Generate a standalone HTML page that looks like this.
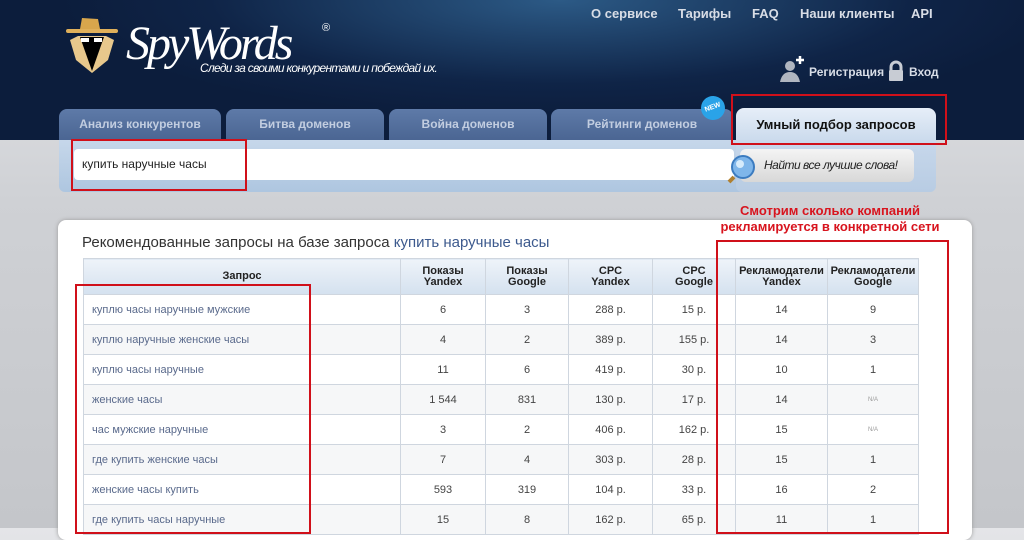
<!DOCTYPE html>
<html><head><meta charset="utf-8"><style>
*{margin:0;padding:0;box-sizing:border-box}
body{width:1024px;height:528px;overflow:hidden;position:relative;font-family:"Liberation Sans",sans-serif;background:linear-gradient(#e4e5e8,#cfd1d5 200px,#c4c6ca)}
.hdr{position:absolute;left:0;top:0;width:1024px;height:140px;background:radial-gradient(ellipse 500px 120px at 560px 0,#2c5a86,#0f2447 70%,#0c1d3c)}
.nav{position:absolute;top:6px;font-weight:bold;font-size:13px;color:#d8dde6}
.logo{position:absolute;left:126px;top:16px;font-family:"Liberation Serif",serif;font-style:italic;font-size:48px;color:#fff;letter-spacing:-3px}
.tag{position:absolute;left:200px;top:61px;font-size:12px;font-style:italic;color:#fff;letter-spacing:-0.7px}
.tab{position:absolute;top:109px;height:32px;border-radius:8px 8px 0 0;background:linear-gradient(#5e7aa8,#4a6592);color:#c2cde0;font-weight:bold;font-size:12px;text-align:center;line-height:30px}
.atab{position:absolute;left:736px;top:108px;width:200px;height:84px;border-radius:8px 8px 6px 6px;background:linear-gradient(#e6eef8,#c5d6ea 40px,#b8cce3)}
.bar{position:absolute;left:59px;top:140px;width:876px;height:52px;background:linear-gradient(#c6d7ea,#aec6e0);border-radius:0 0 6px 6px}
.inp{position:absolute;left:74px;top:149px;width:660px;height:31px;background:#fff;border-radius:4px;font-size:12px;line-height:31px;padding-left:8px;color:#222}
.btn{position:absolute;left:740px;top:149px;width:174px;height:33px;border-radius:6px;background:linear-gradient(#f4f4f4,#d8d8d8);font-style:italic;font-size:12px;line-height:32px;padding-left:24px;color:#222;letter-spacing:-0.5px}
.panel{position:absolute;left:58px;top:220px;width:914px;height:320px;background:#fff;border-radius:8px;box-shadow:0 0 4px #999}
.rb{position:absolute;border:2px solid #d0101a}
table{position:absolute;left:83px;top:258px;border-collapse:collapse;font-size:11px;color:#444}
td,th{border:1px solid #cfd6df;height:30px;text-align:center}
th{height:36px;background:linear-gradient(#eef3f9,#d4e1ef);font-size:11px;line-height:11px;color:#222}
td.q{text-align:left;padding-left:8px;color:#5a6a8c}
tr:nth-child(odd) td{background:#f6f7f8}
.na{font-size:6px;color:#999}
</style></head><body>
<div class="hdr"></div>
<div class="nav" style="left:591px">О сервисе</div>
<div class="nav" style="left:678px">Тарифы</div>
<div class="nav" style="left:752px">FAQ</div>
<div class="nav" style="left:800px">Наши клиенты</div>
<div class="nav" style="left:911px">API</div>
<svg style="position:absolute;left:64px;top:15px" width="56" height="60" viewBox="0 0 56 60">
<path d="M18 3 L34 4 L36 14 L16 14Z" fill="#d8a64c"/><rect x="2" y="14" width="52" height="4" rx="2" fill="#e0b05a"/>
<path d="M6 25 L14 21 L42 21 L50 25 L44 45 L28 58 L12 45Z" fill="#e8c88c"/>
<path d="M16 22 L40 22 L28 56Z" fill="#000"/><rect x="17" y="23" width="8" height="4" fill="#fff"/><rect x="30" y="23" width="8" height="4" fill="#fff"/></svg>
<div class="logo">SpyWords</div>
<div style="position:absolute;left:322px;top:22px;color:#fff;font-size:11px">®</div>
<div class="tag">Следи за своими конкурентами и побеждай их.</div>
<svg style="position:absolute;left:778px;top:54px" width="28" height="30"><circle cx="12" cy="12" r="5" fill="#b0b6c0"/><path d="M2 28 Q4 18 12 18 Q20 18 22 28Z" fill="#b0b6c0"/><path d="M22 2v8M18 6h8" stroke="#fff" stroke-width="2.5"/></svg>
<div class="nav" style="left:809px;top:65px;font-size:12px">Регистрация</div>
<svg style="position:absolute;left:887px;top:60px" width="18" height="22"><path d="M4 10V7a5 5 0 0 1 10 0v3" stroke="#c8ccd4" stroke-width="3" fill="none"/><rect x="2" y="10" width="14" height="11" rx="1" fill="#c8ccd4"/></svg>
<div class="nav" style="left:909px;top:65px;font-size:12px">Вход</div>
<div class="tab" style="left:59px;width:162px">Анализ конкурентов</div>
<div class="tab" style="left:226px;width:158px">Битва доменов</div>
<div class="tab" style="left:389px;width:158px">Война доменов</div>
<div class="tab" style="left:551px;width:182px">Рейтинги доменов</div>
<div style="position:absolute;left:701px;top:96px;width:24px;height:24px;border-radius:50%;background:#2aa3e8;color:#fff;font-size:7px;font-weight:bold;text-align:center;line-height:24px;transform:rotate(-20deg)">NEW</div>
<div class="bar"></div>
<div class="atab"></div>
<div style="position:absolute;left:736px;top:117px;width:200px;text-align:center;font-weight:bold;font-size:13px;color:#111">Умный подбор запросов</div>
<div class="inp">купить наручные часы</div>
<div class="btn">Найти все лучшие слова!</div>
<svg style="position:absolute;left:726px;top:153px" width="32" height="32"><line x1="8" y1="24" x2="3" y2="29" stroke="#b08030" stroke-width="4"/><circle cx="17" cy="14" r="11" fill="#7fb6ea" stroke="#3c7cc0" stroke-width="2"/><circle cx="14" cy="11" r="4" fill="#d6ebfb"/></svg>
<div class="panel"></div>
<div style="position:absolute;left:82px;top:234px;font-size:15px;color:#333">Рекомендованные запросы на базе запроса <span style="color:#3d5a8e">купить наручные часы</span></div>
<div style="position:absolute;left:695px;top:203px;width:270px;text-align:center;color:#d8141e;font-weight:bold;font-size:13px;line-height:16px">Смотрим сколько компаний<br>рекламируется в конкретной сети</div>
<table>
<tr><th style="width:317px">Запрос</th><th style="width:85px">Показы<br>Yandex</th><th style="width:83px">Показы<br>Google</th><th style="width:84px">CPC<br>Yandex</th><th style="width:83px">CPC<br>Google</th><th style="width:92px">Рекламодатели<br>Yandex</th><th style="width:91px">Рекламодатели<br>Google</th></tr>
<tr><td class="q">куплю часы наручные мужские</td><td>6</td><td>3</td><td>288 р.</td><td>15 р.</td><td>14</td><td>9</td></tr>
<tr><td class="q">куплю наручные женские часы</td><td>4</td><td>2</td><td>389 р.</td><td>155 р.</td><td>14</td><td>3</td></tr>
<tr><td class="q">куплю часы наручные</td><td>11</td><td>6</td><td>419 р.</td><td>30 р.</td><td>10</td><td>1</td></tr>
<tr><td class="q">женские часы</td><td>1 544</td><td>831</td><td>130 р.</td><td>17 р.</td><td>14</td><td class="na">N/A</td></tr>
<tr><td class="q">час мужские наручные</td><td>3</td><td>2</td><td>406 р.</td><td>162 р.</td><td>15</td><td class="na">N/A</td></tr>
<tr><td class="q">где купить женские часы</td><td>7</td><td>4</td><td>303 р.</td><td>28 р.</td><td>15</td><td>1</td></tr>
<tr><td class="q">женские часы купить</td><td>593</td><td>319</td><td>104 р.</td><td>33 р.</td><td>16</td><td>2</td></tr>
<tr><td class="q">где купить часы наручные</td><td>15</td><td>8</td><td>162 р.</td><td>65 р.</td><td>11</td><td>1</td></tr>
</table>
<div class="rb" style="left:71px;top:139px;width:176px;height:52px"></div>
<div class="rb" style="left:731px;top:94px;width:216px;height:51px"></div>
<div class="rb" style="left:75px;top:284px;width:236px;height:250px"></div>
<div class="rb" style="left:716px;top:240px;width:233px;height:294px"></div>
</body></html>
